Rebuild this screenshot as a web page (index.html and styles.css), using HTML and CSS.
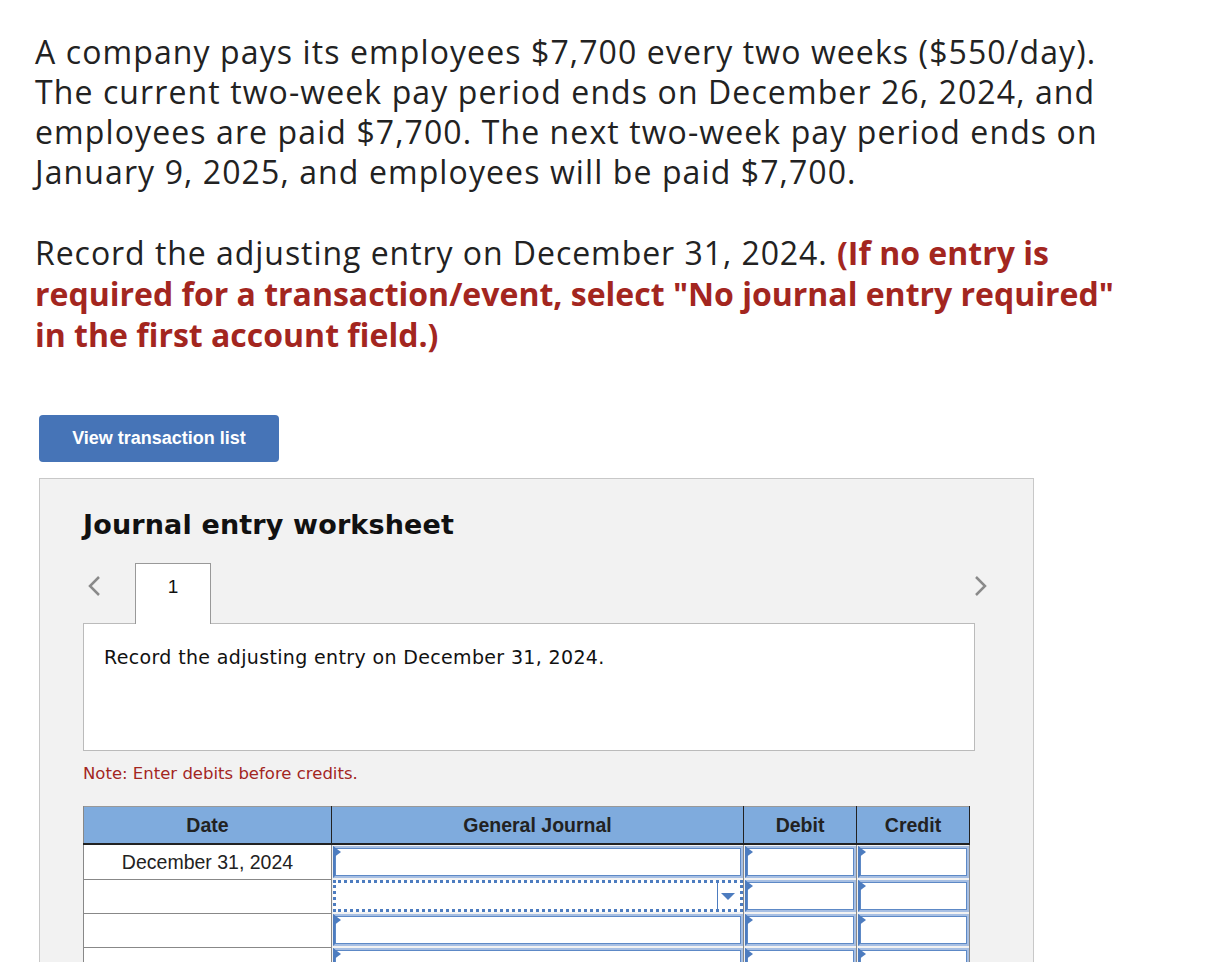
FILE: index.html
```html
<!doctype html>
<html>
  <head>
    <meta name="viewport" content="width=device-width, initial-scale=1">
    <link rel="stylesheet" href="styles.css">
    <title>Journal entry worksheet</title>
  </head>
  <body>
    <div class="page">
      <p class="question">A company pays its employees $7,700 every two weeks ($550/day). The current two-week pay period ends on December 26, 2024, and employees are paid $7,700. The next two-week pay period ends on January 9, 2025, and employees will be paid $7,700.</p>
      <p class="question second">Record the adjusting entry on December 31, 2024. <b class="hint">(If no entry is required for a transaction/event, select "No journal entry required" in the first account field.)</b></p>

      <button class="view-btn">View transaction list</button>

      <div class="worksheet">
        <h2>Journal entry worksheet</h2>

        <div class="tabs">
          <span class="arrow">
            <svg width="16" height="24" viewBox="0 0 16 24"><path d="M13 3 L4 12 L13 21" fill="none" stroke="#8a8a8a" stroke-width="2.5"/></svg>
          </span>
          <div class="tab">1</div>
          <span class="arrow right">
            <svg width="16" height="24" viewBox="0 0 16 24"><path d="M3 3 L12 12 L3 21" fill="none" stroke="#8a8a8a" stroke-width="2.5"/></svg>
          </span>
        </div>
        <div class="tab-body">Record the adjusting entry on December 31, 2024.</div>

        <p class="note">Note: Enter debits before credits.</p>

        <table class="journal">
          <tr>
            <th class="c-date">Date</th>
            <th class="c-acct">General Journal</th>
            <th class="c-num">Debit</th>
            <th class="c-num">Credit</th>
          </tr>
          <tr>
            <td class="date">December 31, 2024</td>
            <td class="in"><div class="field"></div></td>
            <td class="in"><div class="field"></div></td>
            <td class="in"><div class="field"></div></td>
          </tr>
          <tr>
            <td class="date"></td>
            <td class="in"><div class="select"><span class="drop"></span></div></td>
            <td class="in"><div class="field"></div></td>
            <td class="in"><div class="field"></div></td>
          </tr>
          <tr>
            <td class="date"></td>
            <td class="in"><div class="field"></div></td>
            <td class="in"><div class="field"></div></td>
            <td class="in"><div class="field"></div></td>
          </tr>
          <tr>
            <td class="date"></td>
            <td class="in"><div class="field"></div></td>
            <td class="in"><div class="field"></div></td>
            <td class="in"><div class="field"></div></td>
          </tr>
          <tr>
            <td class="date"></td>
            <td class="in"><div class="field"></div></td>
            <td class="in"><div class="field"></div></td>
            <td class="in"><div class="field"></div></td>
          </tr>
        </table>
      </div>
    </div>
  </body>
</html>
```

FILE: styles.css
```css
body {
  margin: 0;
  background: #ffffff;
}
.page {
  padding: 32px 0 40px 35px;
  width: 1100px;
}
.question {
  margin: 0;
  width: 1100px;
  font-family: "Open Sans", sans-serif;
  font-size: 32px;
  line-height: 40px;
  letter-spacing: 1.1px;
  color: #222222;
}
.question.second {
  margin-top: 40px;
  line-height: 41px;
  letter-spacing: 0.95px;
}
.hint {
  color: #a3261f;
  font-weight: 700;
  letter-spacing: 0;
}
.view-btn {
  display: block;
  margin: 60px 0 0 4px;
  width: 240px;
  height: 47px;
  border: none;
  border-radius: 4px;
  background: #4674b7;
  color: #ffffff;
  font-family: "Liberation Sans", Arial, sans-serif;
  font-size: 18px;
  font-weight: bold;
  cursor: pointer;
}
.worksheet {
  margin: 16px 0 0 4px;
  width: 950px;
  padding: 28px 0 0 43px;
  background: #f2f2f2;
  border: 1px solid #c8c8c8;
  font-family: "DejaVu Sans", Verdana, sans-serif;
}
.worksheet h2 {
  margin: 0;
  font-size: 27px;
  line-height: 36px;
  letter-spacing: 0.15px;
  font-weight: bold;
  color: #111111;
}
.tabs {
  display: flex;
  align-items: flex-start;
  margin-top: 20px;
  width: 910px;
}
.arrow {
  padding: 11px 0 0 3px;
  width: 49px;
}
.arrow.right {
  margin-left: auto;
  width: 20px;
}
.tab {
  width: 76px;
  height: 61px;
  box-sizing: border-box;
  background: #ffffff;
  border: 1px solid #999999;
  border-bottom: none;
  text-align: center;
  padding-top: 12px;
  font-family: "Liberation Sans", Arial, sans-serif;
  font-size: 19px;
  color: #111111;
  position: relative;
  z-index: 1;
  margin-bottom: -1px;
}
.tab-body {
  width: 892px;
  height: 128px;
  box-sizing: border-box;
  background: #ffffff;
  border: 1px solid #bbbbbb;
  padding: 22px 20px;
  font-size: 19px;
  letter-spacing: 0.35px;
  color: #111111;
}
.note {
  margin: 13px 0 0 0;
  font-size: 16.5px;
  color: #a3261f;
  line-height: 20px;
}
.journal {
  margin-top: 22px;
  border-collapse: collapse;
  border-top: 1px solid #999999;
  font-family: "Liberation Sans", Arial, sans-serif;
}
.journal th {
  height: 36px;
  padding: 0;
  background: #7fabdd;
  font-size: 19.5px;
  font-weight: bold;
  color: #222222;
  border-left: 1px solid #222222;
  border-bottom: 2px solid #222222;
}
.journal th:first-child {
  border-left: 1px solid #888888;
}
.journal th:last-child {
  border-right: 1px solid #222222;
}
.c-date { width: 247px; }
.c-acct { width: 411px; }
.c-num { width: 112px; }
.journal td {
  height: 32px;
  padding: 0;
}
.date {
  background: #ffffff;
  border-left: 1px solid #888888;
  border-bottom: 1px solid #888888;
  text-align: center;
  font-size: 19.5px;
  line-height: 22px;
  color: #222222;
}
.in {
  padding: 1px 0 1px 1px !important;
  border-left: 1px solid #888888;
}
.journal tr td.in:last-child {
  border-right: 1px solid #888888;
}
.field, .select {
  position: relative;
  height: 32px;
  box-sizing: border-box;
  background: #ffffff;
}
.field {
  border: 2px solid #a7bfe3;
  border-left-color: #4d7cbf;
  box-shadow: 0 0 0 1px #5d89c6 inset;
}
.field::before {
  content: "";
  position: absolute;
  left: -2px;
  top: -2px;
  border-left: 8px solid #4d7cbf;
  border-top: 6px solid transparent;
  border-bottom: 6px solid transparent;
}
.select {
  border: 3px dotted #4d7cbf;
}
.drop {
  position: absolute;
  right: 0;
  top: 0;
  width: 22px;
  height: 100%;
  border-left: 1px solid #4d7cbf;
}
.drop::after {
  content: "";
  position: absolute;
  left: 3px;
  top: 10px;
  border-top: 7px solid #4d7cbf;
  border-left: 7px solid transparent;
  border-right: 7px solid transparent;
}
```
